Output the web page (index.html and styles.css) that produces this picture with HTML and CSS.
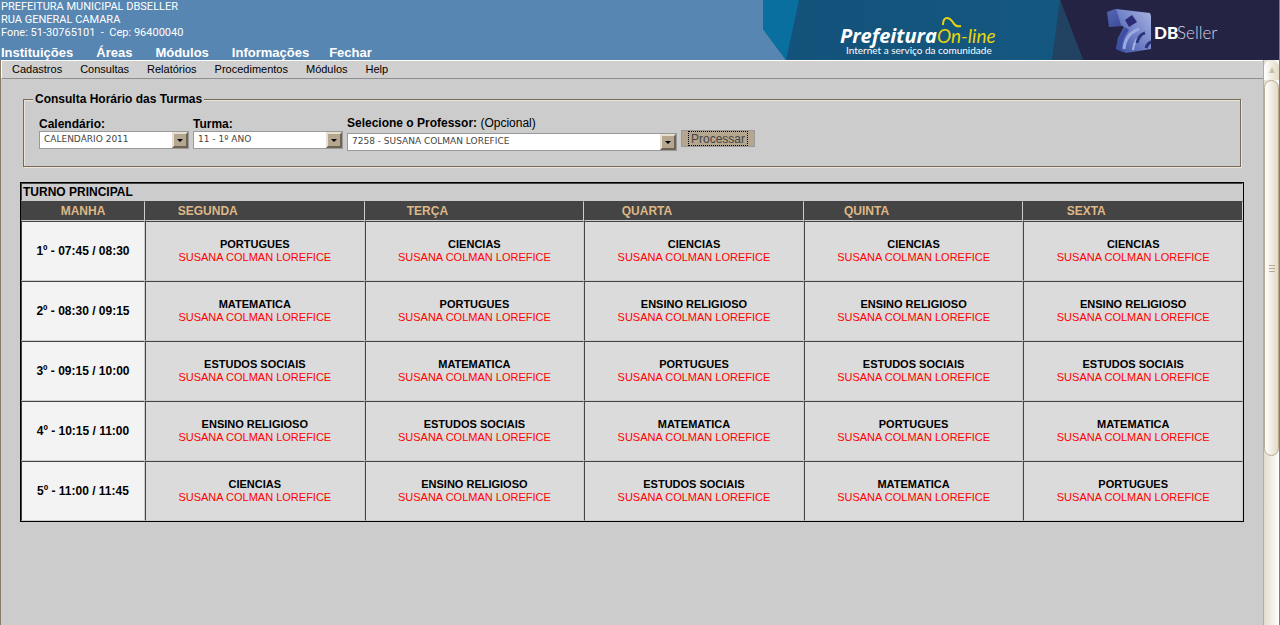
FILE: index.html
```html
<!DOCTYPE html>
<html lang="pt-BR">
<head>
<meta charset="utf-8">
<title>Consulta Horário das Turmas</title>
<link rel="stylesheet" href="styles.css">
</head>
<body>
<header class="top">
  <div class="top-left">
    <address class="org">PREFEITURA MUNICIPAL DBSELLER<br>RUA GENERAL CAMARA<br>Fone: 51-30765101 &nbsp;-&nbsp; Cep: 96400040</address>
    <nav class="main-nav">
      <a class="wide" href="#">Instituições</a><a class="wide" href="#">Áreas</a><a class="wide" href="#">Módulos</a><a href="#">Informações</a><a href="#">Fechar</a>
    </nav>
  </div>
  <svg class="banner" viewBox="0 0 517 60" role="img" aria-label="Prefeitura On-line, DBSeller">
    <defs>
      <linearGradient id="cube" x1="0" y1="0" x2="1" y2="1">
        <stop offset="0" stop-color="#5468b4"/><stop offset="1" stop-color="#3a4896"/>
      </linearGradient>
      <linearGradient id="face" x1="1" y1="0" x2="0" y2="1">
        <stop offset="0" stop-color="#a9b4e2"/><stop offset=".5" stop-color="#7283c8"/><stop offset="1" stop-color="#3a4ca0"/>
      </linearGradient>
      <linearGradient id="sea"><stop offset="0" stop-color="#14527a"/><stop offset="1" stop-color="#135b84"/></linearGradient>
    </defs>
    <path fill="url(#sea)" d="M0 0H517V60H0z"/>
    <path fill="#5786b2" d="M0 29L23 60H0z"/>
    <path fill="#096f9f" d="M0 0H36L23 60L0 29z"/>
    <path fill="#252343" d="M297 0H516V60H320z"/>
    <path fill="#214261" d="M297 0L320 60H289z"/>
    <path fill="#8b7b66" d="M516 0H517V60H516z"/>
    <text class="brand" x="77" y="43">Prefeitura</text>
    <text class="brand-line" x="174" y="43">On-line</text>
    <path d="M180 25C180 17 185 16 189 21C192 26 194 27 198 26" fill="none" stroke="#e8d50b" stroke-width="2"/>
    <text class="tagline" x="83" y="54">Internet a serviço da comunidade</text>
    <path fill="url(#cube)" d="M344 12L352 9L361 11L361 26L346 27z"/>
    <path fill="url(#face)" d="M353 9L387 13L388 16V49L363 53L353 49L355 38L361 27L358 25z"/>
    <path fill="#3d4fa2" d="M353 49L356 37L362 27L366 30C360 38 358 44 359 52z"/>
    <path fill="#2c2a75" d="M362 20L369 15L374 22L366 27z"/>
    <path d="M361 49C362 39 367 32 376 29" fill="none" stroke="#9aa9e0" stroke-width="3"/>
    <path d="M370 50C371 41 375 36 382 34" fill="none" stroke="#a9b5e6" stroke-width="2"/>
    <path d="M374 43C375 38 378 34 382 33M383 48C384 45 385 43 388 42" fill="none" stroke="#2c3578" stroke-width="3"/>
    <text class="seller-bold" x="391" y="39">DB</text>
    <text class="seller-light" x="414" y="39">Seller</text>
  </svg>
</header>
<div class="frame">
  <div class="page">
    <nav class="sub-nav">
      <a href="#">Cadastros</a><a href="#">Consultas</a><a href="#">Relatórios</a><a href="#">Procedimentos</a><a href="#">Módulos</a><a href="#">Help</a>
    </nav>
    <main class="content">
      <form>
        <fieldset class="filters">
          <legend>Consulta Horário das Turmas</legend>
          <div class="fields">
            <div class="field">
              <label for="cal">Calendário:</label>
              <span class="pick"><select id="cal"><option>CALENDÁRIO 2011</option></select><span class="arrow"></span></span>
            </div>
            <div class="field">
              <label for="turma">Turma:</label>
              <span class="pick"><select id="turma"><option>11 - 1º ANO</option></select><span class="arrow"></span></span>
            </div>
            <div class="field teacher">
              <label for="prof">Selecione o Professor: <span class="optional">(Opcional)</span></label>
              <span class="pick"><select id="prof"><option>7258 - SUSANA COLMAN LOREFICE</option></select><span class="arrow"></span></span>
            </div>
            <button class="process" type="button"><span>Processar</span></button>
          </div>
        </fieldset>
      </form>
      <table class="schedule">
        <colgroup><col class="time-col"><col><col><col><col><col></colgroup>
        <thead>
          <tr class="shift"><th colspan="6">TURNO PRINCIPAL</th></tr>
          <tr class="days"><th class="shift-name">MANHA</th><th>SEGUNDA</th><th>TERÇA</th><th>QUARTA</th><th>QUINTA</th><th>SEXTA</th></tr>
        </thead>
        <tbody>
          <tr><th>1º - 07:45 / 08:30</th><td><b>PORTUGUES</b><span>SUSANA COLMAN LOREFICE</span></td><td><b>CIENCIAS</b><span>SUSANA COLMAN LOREFICE</span></td><td><b>CIENCIAS</b><span>SUSANA COLMAN LOREFICE</span></td><td><b>CIENCIAS</b><span>SUSANA COLMAN LOREFICE</span></td><td><b>CIENCIAS</b><span>SUSANA COLMAN LOREFICE</span></td></tr>
          <tr><th>2º - 08:30 / 09:15</th><td><b>MATEMATICA</b><span>SUSANA COLMAN LOREFICE</span></td><td><b>PORTUGUES</b><span>SUSANA COLMAN LOREFICE</span></td><td><b>ENSINO RELIGIOSO</b><span>SUSANA COLMAN LOREFICE</span></td><td><b>ENSINO RELIGIOSO</b><span>SUSANA COLMAN LOREFICE</span></td><td><b>ENSINO RELIGIOSO</b><span>SUSANA COLMAN LOREFICE</span></td></tr>
          <tr><th>3º - 09:15 / 10:00</th><td><b>ESTUDOS SOCIAIS</b><span>SUSANA COLMAN LOREFICE</span></td><td><b>MATEMATICA</b><span>SUSANA COLMAN LOREFICE</span></td><td><b>PORTUGUES</b><span>SUSANA COLMAN LOREFICE</span></td><td><b>ESTUDOS SOCIAIS</b><span>SUSANA COLMAN LOREFICE</span></td><td><b>ESTUDOS SOCIAIS</b><span>SUSANA COLMAN LOREFICE</span></td></tr>
          <tr><th>4º - 10:15 / 11:00</th><td><b>ENSINO RELIGIOSO</b><span>SUSANA COLMAN LOREFICE</span></td><td><b>ESTUDOS SOCIAIS</b><span>SUSANA COLMAN LOREFICE</span></td><td><b>MATEMATICA</b><span>SUSANA COLMAN LOREFICE</span></td><td><b>PORTUGUES</b><span>SUSANA COLMAN LOREFICE</span></td><td><b>MATEMATICA</b><span>SUSANA COLMAN LOREFICE</span></td></tr>
          <tr><th>5º - 11:00 / 11:45</th><td><b>CIENCIAS</b><span>SUSANA COLMAN LOREFICE</span></td><td><b>ENSINO RELIGIOSO</b><span>SUSANA COLMAN LOREFICE</span></td><td><b>ESTUDOS SOCIAIS</b><span>SUSANA COLMAN LOREFICE</span></td><td><b>MATEMATICA</b><span>SUSANA COLMAN LOREFICE</span></td><td><b>PORTUGUES</b><span>SUSANA COLMAN LOREFICE</span></td></tr>
        </tbody>
      </table>
    </main>
  </div>
  <div class="scrollbar" aria-hidden="true">
    <div class="scroll-up"><svg viewBox="0 0 6 6"><path fill="#c9c0a8" d="M3 0L6 6H0z"/></svg></div>
    <div class="thumb"><i></i><i></i><i></i></div>
  </div>
</div>
</body>
</html>
```
FILE: styles.css
```css
* { box-sizing: border-box; }
body {
  margin: 0;
  min-height: 100vh;
  display: flex;
  flex-direction: column;
  background: #ccc;
  color: #000;
  font: 12px/14px "Liberation Sans", Arial, sans-serif;
}
a { color: inherit; text-decoration: none; }

.top {
  display: flex;
  justify-content: space-between;
  height: 60px;
  background: #5786b2;
  color: #fff;
}
.top-left {
  display: flex;
  flex-direction: column;
  justify-content: space-between;
  padding-left: 1px;
}
.org { font: 11px/13px Roboto, "Liberation Sans", sans-serif; white-space: nowrap; }
.main-nav { display: flex; gap: 20px; font-size: 13px; line-height: 15px; font-weight: bold; }
.main-nav .wide { padding-right: 3px; }
.banner { width: 517px; height: 60px; flex: none; }
.brand { font: italic bold 20px "Open Sans", sans-serif; fill: #fff; }
.brand-line { font: italic 19px Lato, sans-serif; fill: #e8d50b; }
.tagline { font: 10px Lato, sans-serif; fill: #fff; }
.seller-bold { font: 900 17px Lato, sans-serif; fill: #fff; }
.seller-light { font: 300 17px Lato, sans-serif; fill: #d5d5e2; }

.frame { flex: 1; display: flex; }
.page { flex: 1; min-width: 0; border-left: 1px solid #8b7b66; }
.sub-nav {
  display: flex;
  gap: 18px;
  padding: 1px 10px;
  font-size: 11px;
  border: 1px solid #fff;
  border-right: 0;
  border-bottom-color: #8f8f8f;
  height: 19px;
  background: #d0d0d0;
}
.content { padding: 13px 19px; }

.filters {
  margin: 0 3px;
  padding: 10px 15px 15px;
  border: 1px solid #75695a;
  box-shadow: 1px 1px 0 #ece5d5, inset 1px 1px 0 #ece5d5;
  min-width: 0;
}
.filters legend { margin-left: -6px; padding: 0 2px; font-weight: bold; background: #ccc; }
.fields { display: flex; gap: 4px; align-items: flex-start; }
.field { display: flex; flex-direction: column; width: 150px; padding-top: 1px; font-weight: bold; }
.teacher { width: 330px; padding: 0; gap: 3px; }
.optional { font-weight: normal; }
.pick { position: relative; display: block; }
.pick select {
  display: block;
  appearance: none;
  width: 100%;
  height: 18px;
  margin: 0;
  padding: 0 20px 2px 4px;
  border: 1px solid #999;
  border-radius: 0;
  background: #fff;
  color: #444;
  font: 9px "DejaVu Sans", sans-serif;
}
.arrow {
  position: absolute;
  top: 1px;
  right: 1px;
  width: 16px;
  height: 16px;
  border: 2px solid;
  border-color: #e6dfd2 #6e6352 #6e6352 #e6dfd2;
  background: #b5a68f;
  display: grid;
  place-items: center;
  pointer-events: none;
}
.arrow::before { content: ""; border: 3px solid transparent; border-top-color: #000; border-bottom: 0; }
.process {
  margin: 14px 0 0;
  padding: 0 6px;
  height: 17px;
  border: 1px solid #999;
  background: #b5a68f;
  color: #444;
  font: 12px/15px "Liberation Sans", Arial, sans-serif;
}
.process span { display: block; padding: 0 2px; border: 1px dotted #000; line-height: 14px; height: 15px; }

.schedule {
  width: 100%;
  margin-top: 15px;
  table-layout: fixed;
  border: 1px solid #000;
  border-spacing: 0;
}
.time-col { width: 124px; }
.schedule th, .schedule td {
  padding: 0;
  border: 1px solid #ccc;
  border-top-color: #444;
  border-left-color: #444;
  text-align: center;
}
.schedule .shift th { height: 18px; padding-left: 1px; text-align: left; }
.schedule .days th { height: 20px; padding-right: 94px; background: #444; color: #deb887; }
.schedule .days .shift-name { padding-right: 0; }
.schedule tbody th { height: 60px; background: #f3f3f3; }
.schedule tbody td { background: #dbdbdb; font-size: 11px; line-height: 13px; }
.schedule td b, .schedule td span { display: block; }
.schedule td span { color: #f00; }

.scrollbar {
  width: 17px;
  border-left: 1px solid #b8ab92;
  border-right: 1px solid #8b7b66;
  background: linear-gradient(90deg, #e3dccb, #fff);
}
.scroll-up {
  height: 20px;
  display: grid;
  place-items: center;
  border-radius: 8px 8px 0 0;
  background: linear-gradient(90deg, #fff, #e3dac5);
}
.scroll-up svg { width: 6px; height: 6px; }
.thumb {
  height: 376px;
  display: flex;
  flex-direction: column;
  align-items: center;
  justify-content: center;
  gap: 2px;
  border: 1px solid #b8ab92;
  border-radius: 8px;
  background: linear-gradient(90deg, #fff, #e3dac5);
}
.thumb i { width: 6px; height: 1px; background: #b8ab92; }
```
